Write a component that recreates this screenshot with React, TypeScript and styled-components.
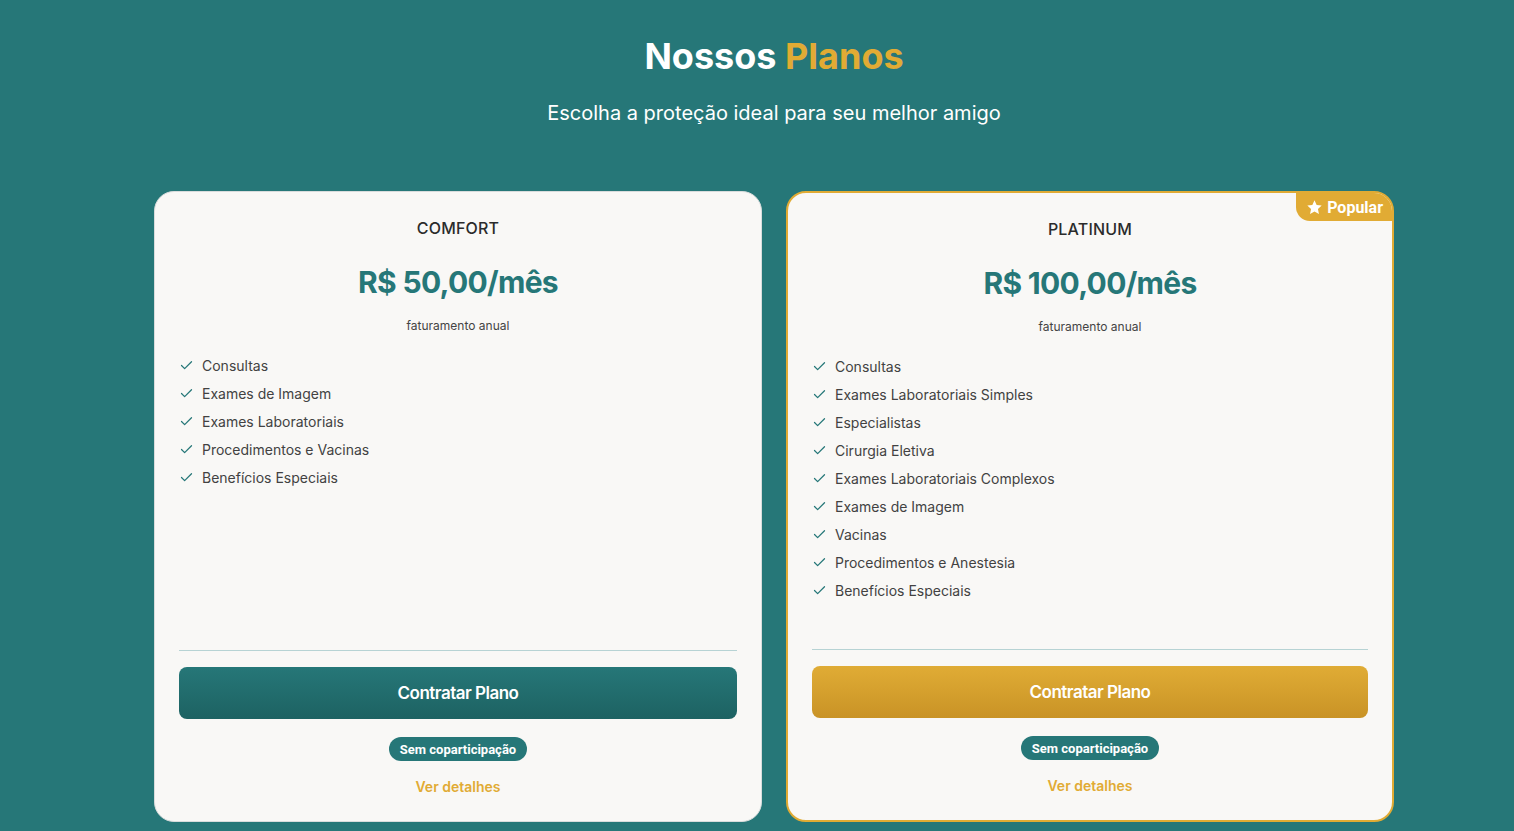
import React from "react";
import styled, { createGlobalStyle } from "styled-components";
import { Check } from "lucide-react";

const TEAL = "#267778";
const GOLD = "#e1ab34";

const Global = createGlobalStyle`
  html, body { margin: 0; padding: 0; background: ${TEAL}; }
  body { font-family: Inter, "Noto Sans", sans-serif; }
  * { box-sizing: border-box; }
`;

const Page = styled.section`
  min-height: 831px;
  padding: 34px 0 0 154px;
`;

const Inner = styled.div`
  width: 1240px;
  display: flex;
  flex-direction: column;
  align-items: center;
`;

const Title = styled.h1`
  margin: 0;
  font-size: 36px;
  line-height: 44px;
  font-weight: 700;
  color: #fff;
`;

const Accent = styled.span`
  color: ${GOLD};
`;

const Subtitle = styled.p`
  margin: 21px 0 0;
  font-size: 20px;
  line-height: 28px;
  color: #fff;
`;

const Grid = styled.div`
  margin-top: 64px;
  width: 100%;
  display: grid;
  grid-template-columns: 1fr 1fr;
  gap: 24px;
`;

const Card = styled.div<{ $popular?: boolean }>`
  position: relative;
  background: #f9f8f6;
  border: ${(p) => (p.$popular ? `2px solid ${GOLD}` : "1px solid #d9dcdc")};
  border-radius: 20px;
  padding: 24px;
  height: 631px;
  display: flex;
  flex-direction: column;
  align-items: center;
  overflow: hidden;
`;

const Badge = styled.div`
  position: absolute;
  top: 0;
  right: 0;
  height: 28px;
  padding: 0 9px 0 10px;
  background: ${GOLD};
  border-bottom-left-radius: 14px;
  display: flex;
  align-items: center;
  gap: 4px;
  color: #fff;
  font-family: Roboto, sans-serif;
  font-weight: 700;
  font-size: 16px;
`;

const PlanName = styled.h2`
  margin: 0;
  font-size: 16px;
  line-height: 24px;
  font-weight: 500;
  color: #2b2b2b;
  letter-spacing: 0.2px;
`;

const Price = styled.div`
  margin-top: 24px;
  font-size: 30px;
  line-height: 36px;
  font-weight: 700;
  color: ${TEAL};
  letter-spacing: -0.7px;
`;

const Billing = styled.div`
  margin-top: 18px;
  font-size: 12px;
  line-height: 16px;
  color: #444;
`;

const Features = styled.ul`
  list-style: none;
  margin: 17px 0 0;
  padding: 0;
  width: 100%;
  flex: 1;
`;

const Feature = styled.li`
  display: flex;
  align-items: center;
  gap: 8px;
  height: 28px;
  font-size: 14px;
  color: #424242;
`;

const Divider = styled.hr`
  width: 100%;
  margin: 0;
  border: 0;
  border-top: 1px solid #b7d3d4;
`;

const Button = styled.button<{ $gold?: boolean }>`
  margin-top: 16px;
  width: 100%;
  height: 52px;
  border: 0;
  border-radius: 8px;
  background: ${(p) =>
    p.$gold
      ? "linear-gradient(180deg, #e0ac35 0%, #c99326 100%)"
      : "linear-gradient(180deg, #267778 0%, #1d6262 100%)"};
  color: #fff;
  font-family: Inter, sans-serif;
  font-size: 17px;
  font-weight: 600;
  letter-spacing: -0.5px;
  cursor: pointer;
`;

const Pill = styled.div`
  margin-top: 18px;
  height: 24px;
  padding: 0 11px;
  border-radius: 12px;
  background: ${TEAL};
  color: #fff;
  font-family: Roboto, sans-serif;
  font-weight: 700;
  font-size: 13px;
  display: flex;
  align-items: center;
`;

const Details = styled.a`
  margin-top: 16px;
  font-size: 14px;
  line-height: 20px;
  font-weight: 600;
  color: ${GOLD};
  text-decoration: none;
`;

type Plan = { name: string; price: string; features: string[]; popular?: boolean };

const plans: Plan[] = [
  {
    name: "COMFORT",
    price: "R$ 50,00/mês",
    features: [
      "Consultas",
      "Exames de Imagem",
      "Exames Laboratoriais",
      "Procedimentos e Vacinas",
      "Benefícios Especiais",
    ],
  },
  {
    name: "PLATINUM",
    price: "R$ 100,00/mês",
    popular: true,
    features: [
      "Consultas",
      "Exames Laboratoriais Simples",
      "Especialistas",
      "Cirurgia Eletiva",
      "Exames Laboratoriais Complexos",
      "Exames de Imagem",
      "Vacinas",
      "Procedimentos e Anestesia",
      "Benefícios Especiais",
    ],
  },
];

const Star = () => (
  <svg width="17" height="17" viewBox="0 0 24 24" fill="#fff">
    <path d="M12 1.8l3.05 6.5 7.05.85-5.22 4.85 1.4 7L12 17.5l-6.28 3.5 1.4-7L1.9 9.15l7.05-.85z" />
  </svg>
);

export default function App() {
  return (
    <>
      <Global />
      <Page>
        <Inner>
          <Title>
            Nossos <Accent>Planos</Accent>
          </Title>
          <Subtitle>Escolha a proteção ideal para seu melhor amigo</Subtitle>
          <Grid>
            {plans.map((p) => (
              <Card key={p.name} $popular={p.popular}>
                {p.popular && (
                  <Badge>
                    <Star />
                    Popular
                  </Badge>
                )}
                <PlanName>{p.name}</PlanName>
                <Price>{p.price}</Price>
                <Billing>faturamento anual</Billing>
                <Features>
                  {p.features.map((f) => (
                    <Feature key={f}>
                      <Check size={15} color={TEAL} strokeWidth={2} />
                      {f}
                    </Feature>
                  ))}
                </Features>
                <Divider />
                <Button $gold={p.popular}>Contratar Plano</Button>
                <Pill>Sem coparticipação</Pill>
                <Details href="#">Ver detalhes</Details>
              </Card>
            ))}
          </Grid>
        </Inner>
      </Page>
    </>
  );
}
